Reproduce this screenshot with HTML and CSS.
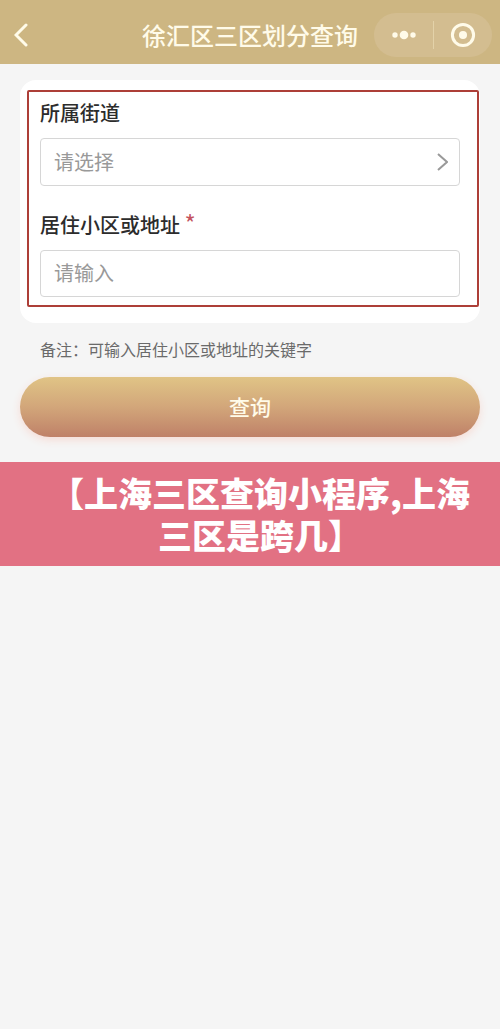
FILE: index.html
```
<!DOCTYPE html>
<html lang="zh-CN">
	<head>
		<meta charset="utf-8">
		<meta name="viewport" content="width=device-width, initial-scale=1">
		<title>徐汇区三区划分查询</title>
		<link rel="stylesheet" href="styles.css">
	</head>
	<body>
		<header class="nav">
			<button type="button" class="back" aria-label="返回">
				<svg width="14" height="24" viewBox="0 0 14 24"><path d="M12 2L2 12L12 22"/></svg>
			</button>
			<h1>徐汇区三区划分查询</h1>
			<div class="capsule">
				<button type="button" aria-label="更多">
					<svg class="dots" width="26" height="10" viewBox="0 0 26 10"><circle cx="4" cy="5" r="2.7"/><circle cx="13" cy="5" r="4.3"/><circle cx="22" cy="5" r="2.7"/></svg>
				</button>
				<button type="button" aria-label="关闭">
					<svg width="26" height="26" viewBox="0 0 26 26"><circle class="ring" cx="13" cy="13" r="10.6"/><circle class="dot" cx="13" cy="13" r="4"/></svg>
				</button>
			</div>
		</header>
		<form class="query">
			<div class="card">
				<div class="frame">
					<label for="street">所属街道</label>
					<div class="field">
						<select id="street">
							<option>请选择</option>
						</select>
						<svg class="arrow" width="12" height="20" viewBox="0 0 12 20"><path d="M2 2L11 10L2 18"/></svg>
					</div>
					<label for="address">居住小区或地址 <span class="must">*</span></label>
					<div class="field">
						<input type="text" id="address" placeholder="请输入">
					</div>
				</div>
			</div>
			<p class="note">备注：可输入居住小区或地址的关键字</p>
			<button type="button" class="submit">查询</button>
		</form>
		<h2 class="caption">【上海三区查询小程序,上海三区是跨几】</h2>
	</body>
</html>
```
FILE: styles.css
```
*{
	margin: 0;
	padding: 0;
	box-sizing: border-box;
}
body{
	background: #f5f5f5;
	font-family: "Noto Sans CJK SC", sans-serif;
	font-size: 20px;
	color: #2c2c2c;
}
button,input,select{
	font-family: inherit;
	border: none;
	background: none;
}
svg{
	display: block;
	fill: none;
}
/* 顶部导航 */
.nav{
	display: grid;
	grid-template-columns: 1fr auto 1fr;
	align-items: center;
	height: 64px;
	padding: 6px 8px 0;
	background: #cdb682;
	color: #fffbe9;
}
.nav h1{
	font-size: 24px;
	font-weight: 500;
	line-height: 36px;
}
.back{
	justify-self: start;
	margin-left: 6px;
}
.back svg{
	stroke: #fffbe9;
	stroke-width: 3;
	stroke-linecap: round;
}
.capsule{
	display: flex;
	justify-self: end;
	width: 118px;
	height: 44px;
	border-radius: 22px;
	background: #d3bd90;
}
.capsule button{
	flex: 1;
	display: flex;
	align-items: center;
	justify-content: center;
	position: relative;
}
.capsule button + button::before{
	content: "";
	position: absolute;
	left: 0;
	top: 8px;
	bottom: 8px;
	border-left: 1px solid #e3d2a9;
}
.dots,.dot{
	fill: #fffbe9;
}
.ring{
	stroke: #fffbe9;
	stroke-width: 3;
}
/* 查询表单 */
.query{
	padding: 16px 20px 25px;
}
.card{
	padding: 10px 1px 16px 7px;
	border-radius: 16px;
	background: #fff;
}
.frame{
	padding: 7px 17px 8px 11px;
	border: 2px solid #ad3f38;
	border-radius: 2px;
}
.frame label{
	display: block;
	font-weight: 500;
	line-height: 28px;
}
.must{
	color: #c4525e;
	font-size: 24px;
	font-weight: 400;
	line-height: 20px;
}
.field{
	position: relative;
	margin: 11px 0 25px;
}
.field:last-child{
	margin-bottom: 0;
}
.field select,.field input{
	display: block;
	width: 100%;
	height: 48px;
	padding: 0 13px 2px;
	border: 1px solid #d6d6d6;
	border-radius: 4px;
	background: #fff;
	font-size: 20px;
	color: #999;
	appearance: none;
}
.field input{
	height: 47px;
}
.field input::placeholder{
	color: #999;
}
.arrow{
	position: absolute;
	right: 12px;
	top: 14px;
	stroke: #999;
	stroke-width: 2;
	pointer-events: none;
}
.note{
	margin: 14px 20px 16px;
	font-size: 16px;
	line-height: 24px;
	color: #6a6a6a;
}
.submit{
	display: block;
	width: 100%;
	height: 60px;
	padding-bottom: 2px;
	border-radius: 30px;
	background: linear-gradient(#e0c486, #d2a67a 50%, #bf8168);
	box-shadow: 0 3px 8px #f6dcd5;
	font-size: 21px;
	font-weight: 500;
	color: #fffbe9;
}
/* 标题条 */
.caption{
	padding: 10px 20px 10px 40px;
	background: #e27183;
	color: #fff;
	font-size: 34px;
	font-weight: 900;
	line-height: 42px;
	text-align: center;
}
```
